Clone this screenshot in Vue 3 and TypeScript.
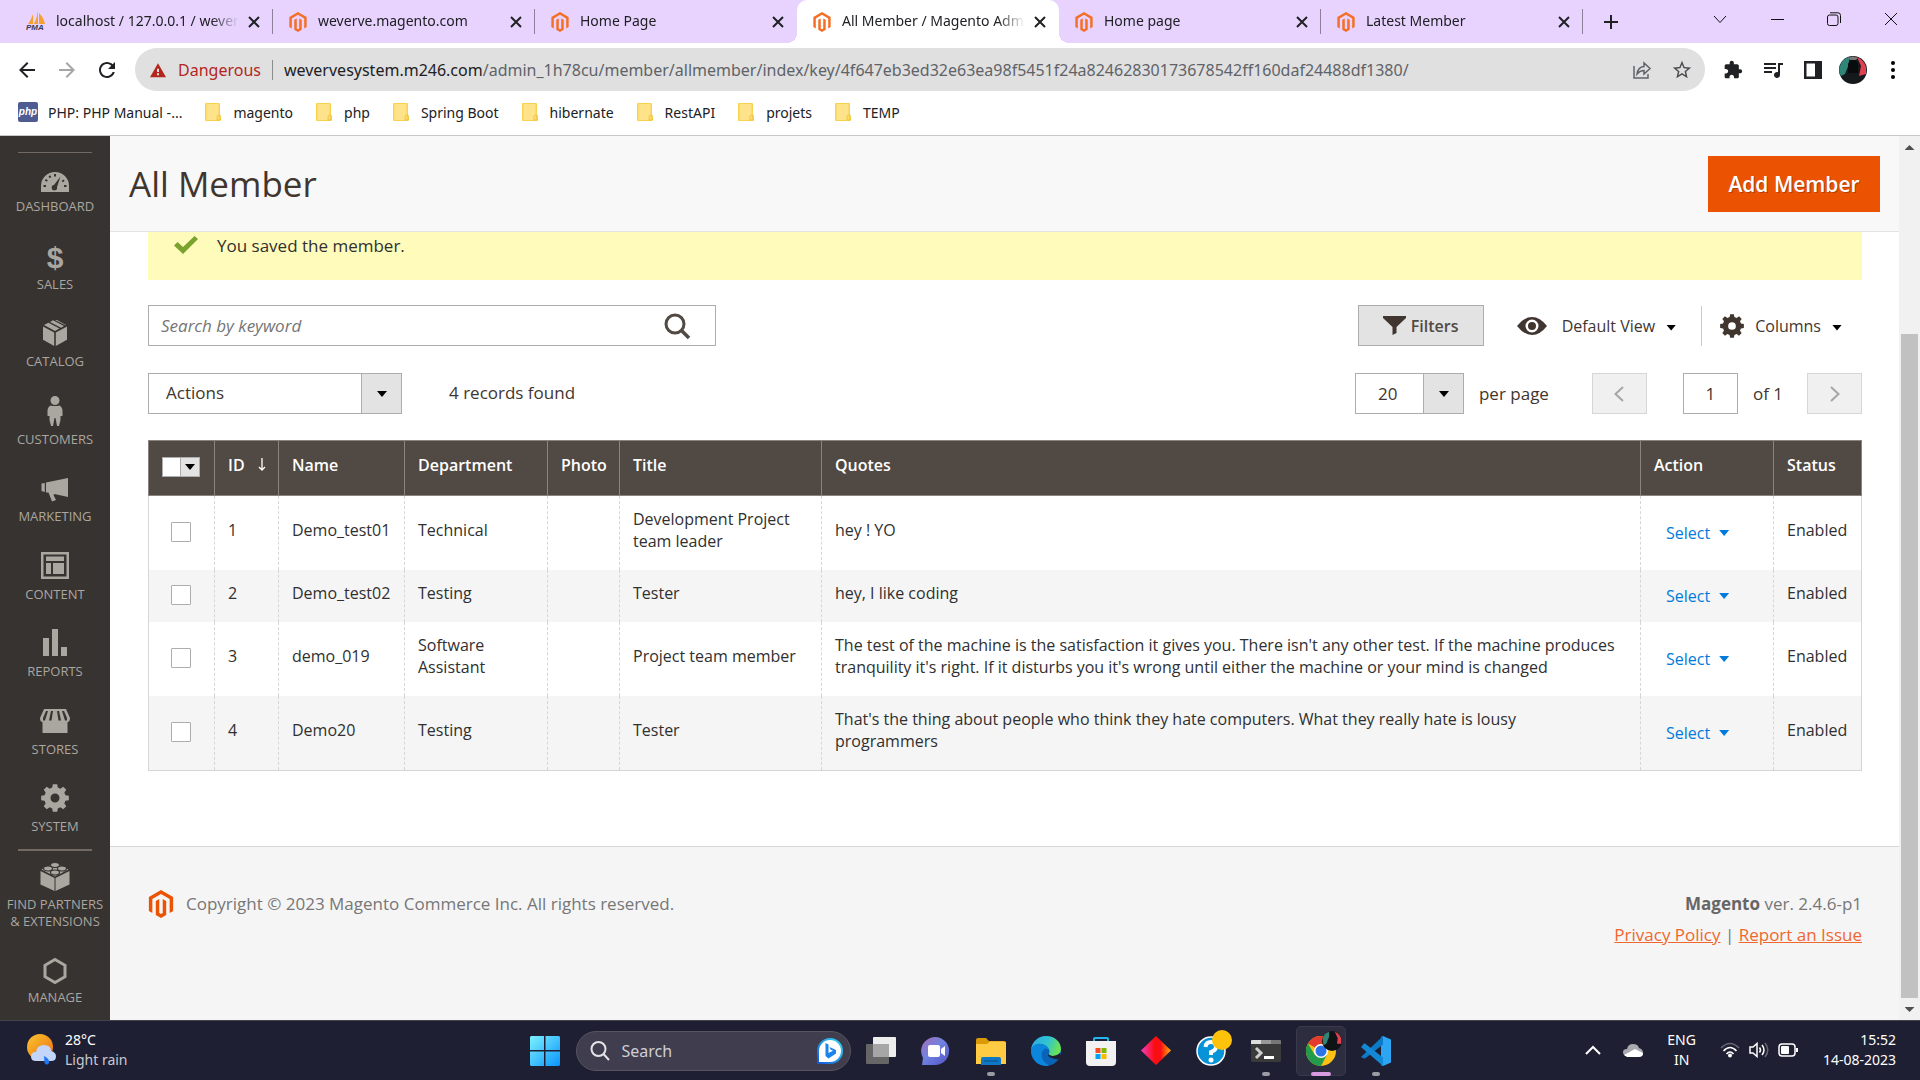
<script setup lang="ts">
import { ref } from 'vue'

interface Tab { title: string; icon: 'pma' | 'magento'; active?: boolean; quiet?: boolean }
interface MenuItem { label: string; path?: string; glyph?: string }
interface Member {
  id: number; name: string; department: string; title: string; quote: string; status: string
}

const tabs: Tab[] = [
  { title: 'localhost / 127.0.0.1 / wever', icon: 'pma' },
  { title: 'weverve.magento.com', icon: 'magento' },
  { title: 'Home Page', icon: 'magento', quiet: true },
  { title: 'All Member / Magento Adm', icon: 'magento', active: true },
  { title: 'Home page', icon: 'magento' },
  { title: 'Latest Member', icon: 'magento' },
]

const folders = ['magento', 'php', 'Spring Boot', 'hibernate', 'RestAPI', 'projets', 'TEMP']

const magentoPath =
  'M12 24l-4.455-2.572v-12l2.97-1.715v12.001l1.485.902 1.485-.902V7.713l2.971 1.715v12L12 24zM22.391 6v12l-2.969 1.714V7.713L12 3.43 4.574 7.713v12.001L1.609 18V6L12 0l10.391 6z'

function gear(c: number, outer: number, inner: number, hole: number): string {
  const points: string[] = []
  for (let i = 0; i < 8; i++) {
    const base = i * 45
    const steps: [number, number][] = [[-15, inner], [-9, outer], [9, outer], [15, inner]]
    for (const [offset, r] of steps) {
      const a = ((base + offset) * Math.PI) / 180
      points.push(`${(c + r * Math.sin(a)).toFixed(2)} ${(c - r * Math.cos(a)).toFixed(2)}`)
    }
  }
  return `M${points.join('L')}ZM${c - hole} ${c}a${hole} ${hole} 0 1 0 ${hole * 2} 0a${hole} ${hole} 0 1 0 ${-hole * 2} 0Z`
}
const gearPath = gear(16, 14, 10.8, 4.5)

const menu: MenuItem[] = [
  {
    label: 'DASHBOARD',
    path: 'M2 30V24a14 14 0 0 1 28 0v6ZM21.500 14.500l-6.500 8.500a2.700 2.700 0 1 0 3 2ZM4.500 23h2.500v2H4.500ZM5.800 18.500l1-1.500 2 1.300-1 1.500ZM9.500 14.500l1.500-1.200 1.300 1.800-1.500 1.200ZM15 12h2v2.500h-2ZM24.500 17.500l1.200 1.500-2 1.300-1-1.500ZM25 23h2.500v2H25Z',
  },
  { label: 'SALES', glyph: '$' },
  {
    label: 'CATALOG',
    path: 'M4 9.500L15.200 15.500V29L4 22.800ZM28 9.500L16.800 15.500V29L28 22.800ZM5 8L9.500 5.700 20.500 11.500 16 14ZM11 5L14 3.300 25 9 22 10.800ZM16 3L18 3 27 8 26.500 8.300Z',
  },
  {
    label: 'CUSTOMERS',
    path: 'M16 1a4.500 4.500 0 1 1 0 9a4.500 4.500 0 1 1 0-9ZM11.500 10.500Q16 11.500 20.500 10.500Q23.500 12 23.500 16V21H21.500V25L20 31H18L16.500 23H15.500L14 31H12L10.500 25V21H8.500V16Q8.500 12 11.500 10.500Z',
  },
  {
    label: 'MARKETING',
    path: 'M7 10.500L29 6V25L15.500 22 14.500 23 17 28 13 29.500 9.500 20.500H7ZM2.500 11.500L5.800 11V20L2.500 19Z',
  },
  {
    label: 'CONTENT',
    path: 'M2 2H30V29H2ZM4.500 4.500V26.500H27.500V4.500ZM7 6.500H25V11H7ZM7 13H12V24H7ZM14 13H25V24H14Z',
  },
  { label: 'REPORTS', path: 'M4 11H10V29H4ZM13 2H19V29H13ZM22 20H28V29H22Z' },
  {
    label: 'STORES',
    path: 'M5 4H27L31 13Q31 17 28.500 17V28H3.500V17Q1 17 1 13ZM7 6L4 13V15.500H6L9 6ZM12 6L10 15.500H12.500L14 6ZM18 6L19.500 15.500H22L20 6ZM23 6L26 15.500H28V13L25 6Z',
  },
  { label: 'SYSTEM', path: gearPath },
]

const members: Member[] = [
  { id: 1, name: 'Demo_test01', department: 'Technical', title: 'Development Project team leader', quote: 'hey ! YO', status: 'Enabled' },
  { id: 2, name: 'Demo_test02', department: 'Testing', title: 'Tester', quote: 'hey, I like coding', status: 'Enabled' },
  { id: 3, name: 'demo_019', department: 'Software Assistant', title: 'Project team member', quote: "The test of the machine is the satisfaction it gives you. There isn't any other test. If the machine produces tranquility it's right. If it disturbs you it's wrong until either the machine or your mind is changed", status: 'Enabled' },
  { id: 4, name: 'Demo20', department: 'Testing', title: 'Tester', quote: "That's the thing about people who think they hate computers. What they really hate is lousy programmers", status: 'Enabled' },
]

const selected = ref<number[]>([])
const keyword = ref('')
const page = ref('1')
</script>

<template>
  <div class="screen">
    <header class="browser">
      <div class="tabs">
        <div v-for="tab in tabs" :key="tab.title" class="tab" :class="{ active: tab.active, quiet: tab.quiet || tab.active }">
          <span class="favicon">
            <svg v-if="tab.icon === 'magento'" width="20" height="20" viewBox="0 0 24 24"><path :d="magentoPath" fill="#f46f25" /></svg>
            <svg v-else width="20" height="22" viewBox="0 0 20 22">
              <path d="M7 3L7 13H2Q5 9 7 3ZM12 0L12 13H8Q11 7 12 0ZM13 2Q18 7 19 13H13Z" fill="#f7a032" />
              <text x="0" y="19" font-family="Liberation Sans, sans-serif" font-size="8" font-weight="700" font-style="italic" fill="#3a3a52">PMA</text>
            </svg>
          </span>
          <span class="tab-title">{{ tab.title }}</span>
          <button class="bare" :aria-label="'Close ' + tab.title">
            <svg width="12" height="12" viewBox="0 0 12 12"><path d="M1 1L11 11M11 1L1 11" stroke="#202124" stroke-width="2" /></svg>
          </button>
        </div>
        <button class="bare new-tab" aria-label="New tab">
          <svg width="16" height="16" viewBox="0 0 16 16"><path d="M8 1V15M1 8H15" stroke="#202124" stroke-width="2" /></svg>
        </button>
        <div class="window-buttons">
          <button class="bare" aria-label="Search tabs"><svg width="14" height="14" viewBox="0 0 14 14"><path d="M1 4L7 10.500L13 4" fill="none" stroke="#111" /></svg></button>
          <button class="bare" aria-label="Minimize"><svg width="14" height="14" viewBox="0 0 14 14"><path d="M1 7.500H14" stroke="#111" /></svg></button>
          <button class="bare" aria-label="Restore"><svg width="14" height="14" viewBox="0 0 14 14"><rect x=".5" y="3" width="10.500" height="10.500" rx="2" fill="none" stroke="#111" /><path d="M3 .8H11Q13.500 .8 13.500 3.500V11" fill="none" stroke="#111" /></svg></button>
          <button class="bare" aria-label="Close"><svg width="14" height="14" viewBox="0 0 14 14"><path d="M1 1L13 13M13 1L1 13" stroke="#111" /></svg></button>
        </div>
      </div>

      <div class="toolbar">
        <button class="bare tool" aria-label="Back"><svg width="24" height="24" viewBox="0 0 24 24"><path d="M20 11H7.830l5.590-5.590L12 4l-8 8 8 8 1.410-1.410L7.830 13H20v-2z" fill="#202124" /></svg></button>
        <button class="bare tool" aria-label="Forward"><svg width="24" height="24" viewBox="0 0 24 24"><path d="M4 11h12.170l-5.590-5.590L12 4l8 8-8 8-1.410-1.410L16.170 13H4z" fill="#a6a6a8" /></svg></button>
        <button class="bare tool" aria-label="Reload"><svg width="24" height="24" viewBox="0 0 24 24"><path d="M17.650 6.350C16.200 4.900 14.210 4 12 4c-4.420 0-7.990 3.580-7.990 8s3.570 8 7.990 8c3.730 0 6.840-2.550 7.730-6h-2.080c-.82 2.330-3.040 4-5.650 4-3.310 0-6-2.690-6-6s2.690-6 6-6c1.660 0 3.140.69 4.220 1.780L13 11h7V4l-2.350 2.350z" fill="#202124" /></svg></button>
        <div class="omnibox">
          <svg width="16" height="16" viewBox="0 0 24 22"><path d="M0 22h24L12 1 0 22zm13.500-3h-3v-3h3v3zm0-5h-3V9h3v5z" fill="#b3261e" /></svg>
          <span class="danger">Dangerous</span>
          <span class="url"><b>wevervesystem.m246.com</b>/admin_1h78cu/member/allmember/index/key/4f647eb3ed32e63ea98f5451f24a82462830173678542ff160daf24488df1380/</span>
          <button class="bare tool" aria-label="Share"><svg width="20" height="20" viewBox="0 0 20 20"><path d="M2 6V18H16V14M5 14Q6 7 12 6.500V3L18 8.500L12 14V10.500Q8 10.500 5 14Z" fill="none" stroke="#5f6368" stroke-width="1.500" /></svg></button>
          <button class="bare tool" aria-label="Bookmark"><svg width="22" height="22" viewBox="0 0 24 24"><path d="M22 9.240l-7.190-.62L12 2 9.190 8.630 2 9.240l5.460 4.730L5.820 21 12 17.270 18.180 21l-1.630-7.030L22 9.240zM12 15.400l-3.760 2.270 1-4.280-3.320-2.880 4.380-.38L12 6.100l1.710 4.040 4.380.38-3.320 2.880 1 4.280L12 15.400z" fill="#4a4c50" /></svg></button>
        </div>
        <button class="bare tool" aria-label="Extensions"><svg width="20" height="20" viewBox="0 0 24 24"><path d="M20.500 11H19V7c0-1.100-.9-2-2-2h-4V3.500C13 2.120 11.880 1 10.500 1S8 2.120 8 3.500V5H4c-1.100 0-1.990.9-1.990 2v3.800H3.500c1.490 0 2.700 1.210 2.700 2.700s-1.210 2.700-2.700 2.700H2V20c0 1.100.9 2 2 2h3.800v-1.500c0-1.490 1.210-2.700 2.700-2.700 1.490 0 2.700 1.210 2.700 2.700V22H17c1.100 0 2-.9 2-2v-4h1.500c1.380 0 2.500-1.120 2.500-2.500S21.880 11 20.500 11z" fill="#202124" /></svg></button>
        <button class="bare tool" aria-label="Media"><svg width="24" height="24" viewBox="0 0 24 24"><path d="M15 5H3v2h12V5zm0 4H3v2h12V9zM3 15h8v-2H3v2zM17 5v9.180c-.31-.11-.65-.18-1-.18-1.660 0-3 1.340-3 3s1.340 3 3 3 3-1.340 3-3V7h3V5h-5z" fill="#202124" /></svg></button>
        <button class="bare tool" aria-label="Side panel"><svg width="18" height="18" viewBox="0 0 18 18"><path d="M0 0H18V18H0ZM2.500 2.500V15.500H11V2.500Z" fill="#202124" fill-rule="evenodd" /></svg></button>
        <button class="bare tool" aria-label="Profile">
          <svg width="28" height="28" viewBox="0 0 28 28"><circle cx="14" cy="14" r="14" fill="#15191c" /><path d="M1 10Q3 3 10 1V8L6 18L2 20Q-1 15 1 10Z" fill="#2f8577" /><path d="M18 1Q25 4 27 11V18L20 20L22 10Z" fill="#e0404f" /><path d="M9 8Q14-3 19 8V17H9Z" fill="#090c0f" /><path d="M9 2Q14-1 19 2L17 4H11Z" fill="#777" /></svg>
        </button>
        <button class="bare tool" aria-label="Menu"><svg width="4" height="18" viewBox="0 0 4 18"><circle cx="2" cy="2" r="2" /><circle cx="2" cy="9" r="2" /><circle cx="2" cy="16" r="2" /></svg></button>
      </div>

      <nav class="bookmarks" aria-label="Bookmarks">
        <a href="#" class="bookmark">
          <svg width="20" height="20" viewBox="0 0 20 20"><rect width="20" height="20" rx="2" fill="#4f5b93" /><text x="10" y="13" text-anchor="middle" font-family="Liberation Sans, sans-serif" font-size="10" font-weight="700" font-style="italic" fill="#fff">php</text></svg>
          PHP: PHP Manual -...
        </a>
        <a v-for="folder in folders" :key="folder" href="#" class="bookmark folder">
          <svg width="16" height="18" viewBox="0 0 16 18"><path d="M1 0H14Q15 0 15 1V12Q16 12 16 14V17Q16 18 14.500 18H1Q0 18 0 17V1Q0 0 1 0Z" fill="#f6d34f" /><path d="M1.500 1H13.500V17H1.500Z" fill="#ffe38b" /><path d="M12 17V13.500Q12 12 14 12H15V17Z" fill="#ffdc6b" stroke="#e8bd35" stroke-width=".7" /></svg>
          {{ folder }}
        </a>
      </nav>
    </header>

    <div class="workspace">
      <aside class="sidebar">
        <ul class="menu">
          <li v-for="item in menu" :key="item.label">
            <a href="#" class="menu-item">
              <svg class="menu-icon" viewBox="0 -1 32 36">
                <text v-if="item.glyph" x="16" y="28" text-anchor="middle" font-family="Liberation Sans, sans-serif" font-size="30" font-weight="700">{{ item.glyph }}</text>
                <path v-else :d="item.path" fill-rule="evenodd" />
              </svg>
              {{ item.label }}
            </a>
          </li>
        </ul>
        <ul class="menu extra">
          <li>
            <a href="#" class="menu-item">
              <svg class="menu-icon" viewBox="0 0 32 36">
                <path d="M1.500 12L15.500 19V32L1.500 25.500ZM30.500 12L16.500 19V32L30.500 25.500ZM2.500 10.500L16 4L29.500 10.500L16 17.500Z" />
                <g stroke="#373330" stroke-width="1.200"><ellipse cx="16" cy="6" rx="4.500" ry="2.500" /><ellipse cx="9" cy="9.500" rx="4.500" ry="2.500" /><ellipse cx="23" cy="9.500" rx="4.500" ry="2.500" /><ellipse cx="16" cy="13.500" rx="4.500" ry="2.500" /></g>
              </svg>
              FIND PARTNERS<br>&amp; EXTENSIONS
            </a>
          </li>
          <li>
            <a href="#" class="menu-item">
              <svg class="menu-icon" viewBox="0 0 32 36"><path d="M16 7.500L26 13.300V24.700L16 30.500L6 24.700V13.300Z" fill="none" stroke="#aaa6a0" stroke-width="3" /></svg>
              MANAGE
            </a>
          </li>
        </ul>
      </aside>

      <main class="page">
        <div class="page-head">
          <h1>All Member</h1>
          <button class="add">Add Member</button>
        </div>

        <div class="content">
          <p class="message">
            <svg width="24" height="18" viewBox="0 0 24 18"><path d="M0 9.500L3.500 6L9 11L20.500 0L24 3L9 18Z" fill="#79a22e" /></svg>
            You saved the member.
          </p>

          <div class="controls">
            <div class="search">
              <input v-model="keyword" type="text" placeholder="Search by keyword" aria-label="Search by keyword">
              <button class="bare" aria-label="Search"><svg width="28" height="28" viewBox="0 0 28 28"><circle cx="12" cy="12" r="9" fill="none" stroke="#514943" stroke-width="3" /><path d="M18 18L26 26" stroke="#514943" stroke-width="3.500" /></svg></button>
            </div>
            <div class="tools">
              <button class="filters"><svg width="23" height="19" viewBox="0 0 23 19"><path d="M0 0H23V2L13.500 11V17L9.500 19V11L0 2Z" fill="#41362f" /></svg>Filters</button>
              <button class="bare view"><svg width="30" height="18" viewBox="0 0 30 18"><path d="M0 9Q7 0 15 0T30 9Q23 18 15 18T0 9ZM15 2.500a6.500 6.500 0 1 0 0 13a6.500 6.500 0 1 0 0-13ZM15 5a4 4 0 1 1 0 8a4 4 0 1 1 0-8Z" fill="#41362f" fill-rule="evenodd" /></svg>Default View<i class="caret"></i></button>
              <button class="bare columns"><svg width="24" height="24" viewBox="2 2 28 28"><path :d="gearPath" fill="#41362f" fill-rule="evenodd" /></svg>Columns<i class="caret"></i></button>
            </div>
          </div>

          <div class="controls second">
            <div class="drop actions">
              <select aria-label="Actions"><option>Actions</option></select><i class="caret"></i>
            </div>
            <span class="records">4 records found</span>
            <div class="pager">
              <label class="size"><span class="drop"><select><option>20</option></select><i class="caret"></i></span>per page</label>
              <button class="step" disabled aria-label="Previous page"><svg width="10" height="16" viewBox="0 0 10 16"><path d="M9 1L1.500 8L9 15" fill="none" stroke="#a6a6a6" stroke-width="2" /></svg></button>
              <label class="current"><input v-model="page" type="text" aria-label="Page">of 1</label>
              <button class="step" disabled aria-label="Next page"><svg width="10" height="16" viewBox="0 0 10 16"><path d="M1 1L8.500 8L1 15" fill="none" stroke="#a6a6a6" stroke-width="2" /></svg></button>
            </div>
          </div>

          <table>
            <colgroup><col class="c-check"><col class="c-id"><col class="c-name"><col class="c-dept"><col class="c-photo"><col class="c-title"><col><col class="c-action"><col class="c-status"></colgroup>
            <thead>
              <tr>
                <th><button class="multi" aria-label="Select rows"><span></span><i class="caret"></i></button></th>
                <th>ID<svg class="sort" width="8" height="13" viewBox="0 0 8 13"><path d="M4 0V12M1 9L4 12L7 9" fill="none" stroke="#fff" stroke-width="1.300" /></svg></th>
                <th>Name</th><th>Department</th><th>Photo</th><th>Title</th><th>Quotes</th><th>Action</th><th>Status</th>
              </tr>
            </thead>
            <tbody>
              <tr v-for="m in members" :key="m.id">
                <td class="check"><input v-model="selected" type="checkbox" :value="m.id" :aria-label="'Select ' + m.name"></td>
                <td>{{ m.id }}</td>
                <td>{{ m.name }}</td>
                <td>{{ m.department }}</td>
                <td></td>
                <td>{{ m.title }}</td>
                <td class="quote">{{ m.quote }}</td>
                <td class="action"><button class="bare">Select<i class="caret"></i></button></td>
                <td>{{ m.status }}</td>
              </tr>
            </tbody>
          </table>
        </div>

        <footer class="foot">
          <p class="copyright"><svg width="28" height="28" viewBox="0 0 24 24"><path :d="magentoPath" fill="#eb5202" /></svg>Copyright © 2023 Magento Commerce Inc. All rights reserved.</p>
          <div class="legal">
            <p><strong>Magento</strong> ver. 2.4.6-p1</p>
            <p><a href="#">Privacy Policy</a> | <a href="#">Report an Issue</a></p>
          </div>
        </footer>
      </main>

      <div class="scrollbar">
        <i class="up"></i>
        <span class="thumb"></span>
        <i class="down"></i>
      </div>
    </div>

    <div class="taskbar">
      <div class="weather">
        <svg width="30" height="32" viewBox="0 0 30 32">
          <defs><linearGradient id="sun" x1="0" y1="0" x2="1" y2="1"><stop offset="0" stop-color="#f8c62f" /><stop offset="1" stop-color="#ef6c12" /></linearGradient></defs>
          <circle cx="13" cy="13" r="13" fill="url(#sun)" /><path d="M9 27Q4 27 4 22.500T9 18Q10 11 17 11T24 17Q29 18 29 22.500T24 27Z" fill="#c4d5fa" /><path d="M17 22Q23 25 22 29Q20 32 17.500 29Z" fill="#2276ef" />
        </svg>
        <div>28°C<br><span>Light rain</span></div>
      </div>

      <div class="apps">
        <button class="bare" aria-label="Start">
          <svg width="30" height="30" viewBox="0 0 30 30"><defs><linearGradient id="win" x1="0" y1="0" x2="1" y2="1" ><stop offset="0" stop-color="#7df1ff" /><stop offset="1" stop-color="#0a94fb" /></linearGradient></defs><path d="M1 0H14V14H0V1ZM15.500 0H29L30 1V14H15.500ZM0 15.500H14V30H1L0 29ZM15.500 15.500H30V29L29 30H15.500Z" fill="url(#win)" /></svg>
        </button>
        <div class="task-search">
          <svg width="20" height="20" viewBox="0 0 20 20"><circle cx="8.500" cy="8" r="7" fill="none" stroke="#e4e4e8" stroke-width="2" /><path d="M13.500 13L19 19" stroke="#e4e4e8" stroke-width="2" /></svg>
          <input type="text" placeholder="Search" aria-label="Search Windows">
          <svg width="26" height="26" viewBox="0 0 26 26"><defs><linearGradient id="bing" x1="1" y1="0" x2="0" y2="1"><stop offset="0" stop-color="#33dcf5" /><stop offset="1" stop-color="#1557d5" /></linearGradient></defs><path d="M1 25V13A12 12 0 1 1 13 25Z" fill="#fff" stroke="url(#bing)" stroke-width="2" /><path d="M8.500 5L11.500 6.500V15L16 12.800L13.500 11.500L12.500 9L19 12V15.500L11.500 20.500L8.500 18Z" fill="#1b83ec" /></svg>
        </div>
        <button class="bare" aria-label="Task view"><svg width="30" height="30" viewBox="0 0 30 30"><rect x="7" y="1" width="23" height="20" rx="1" fill="#ededed" /><rect x="0" y="8" width="23" height="20" rx="1" fill="#666" /><rect x="7" y="8" width="16" height="13" fill="#a6a6a6" /></svg></button>
        <button class="bare" aria-label="Chat"><svg width="30" height="30" viewBox="0 0 30 30"><defs><linearGradient id="chat" x1="0" y1="0" x2="1" y2="1"><stop offset="0" stop-color="#a66bb4" /><stop offset=".45" stop-color="#7183e1" /><stop offset="1" stop-color="#5052c6" /></linearGradient></defs><path d="M1 29L2 22A14 14 0 1 1 15 29Z" fill="url(#chat)" /><rect x="7" y="9" width="12" height="12" rx="2" fill="#fff" /><path d="M20 13L24 10V20L20 17Z" fill="#fff" /></svg></button>
        <button class="bare running" aria-label="File Explorer"><svg width="30" height="30" viewBox="0 0 30 30"><path d="M0 4Q0 2 2 2H10L13 5H28Q30 5 30 7V12H0Z" fill="#d99a05" /><path d="M0 8H11L14 5.500H28Q30 5.500 30 7V28H0Z" fill="#ffcb42" /><path d="M5 29V23Q5 21 7 21H23Q25 21 25 23V29Z" fill="#0f78c4" /><path d="M8 25H22" stroke="#084f86" /></svg></button>
        <button class="bare" aria-label="Edge"><svg width="30" height="30" viewBox="0 0 30 30"><defs><linearGradient id="edge" x1="0" y1="0" x2="1" y2=".3"><stop offset="0" stop-color="#2aa9e6" /><stop offset=".6" stop-color="#31c5ce" /><stop offset="1" stop-color="#69e05a" /></linearGradient></defs><circle cx="15" cy="15" r="15" fill="#0b63b8" /><path d="M0 14C1 5 8 0 15 0C24 0 30 6 30 13C30 18 26 20 22 20C18 20 17 18 18.500 16.500C19 11 12 7 7 8Q2 9 0 14Z" fill="url(#edge)" /><path d="M0 14Q2 7 9 8Q16 8 18 14Q14 10 11 16Q9 25 18 29.500Q12 31 6 27Q0 22 0 14Z" fill="#0c86dc" /><path d="M18.500 16.500Q16.500 19.500 22 20Q26 20 29 17L30 21L27.500 23Q22 24 17 20Z" fill="#1f1f33" /></svg></button>
        <button class="bare" aria-label="Store"><svg width="30" height="30" viewBox="0 0 30 30"><path d="M8 7V3Q8 2 9 2H21Q22 2 22 3V7" fill="none" stroke="#22b6ee" stroke-width="2" /><path d="M0 5H30V26Q30 30 26 30H4Q0 30 0 26Z" fill="#f2f2f2" /><path d="M9.500 12H14.500V17H9.500Z" fill="#f25022" /><path d="M15.500 12H20.500V17H15.500Z" fill="#7fba00" /><path d="M9.500 18H14.500V23H9.500Z" fill="#00a4ef" /><path d="M15.500 18H20.500V23H15.500Z" fill="#ffb900" /></svg></button>
        <button class="bare" aria-label="Design"><svg width="30" height="30" viewBox="0 0 30 30"><defs><linearGradient id="gem"><stop offset="0" stop-color="#f53cc0" /><stop offset=".45" stop-color="#fb0d14" /><stop offset=".65" stop-color="#fb0d14" /><stop offset="1" stop-color="#ffb10a" /></linearGradient></defs><path d="M15 0L30 14.500L15 29L0 14.500Z" fill="url(#gem)" /></svg></button>
        <button class="bare badge" aria-label="Help"><svg width="30" height="30" viewBox="0 0 30 30"><circle cx="15" cy="15" r="14" fill="#0693d7" stroke="#fff" stroke-width="1.500" /><path d="M9.500 11Q10 6 15 6T20 11Q20 14 15 16V19" fill="none" stroke="#fff" stroke-width="4" /><circle cx="15" cy="24" r="2.500" fill="#fff" /></svg></button>
        <button class="bare running" aria-label="Terminal"><svg width="30" height="30" viewBox="0 0 30 30"><rect x="0" y="4" width="30" height="22" rx="1.500" fill="#3a3a3a" /><path d="M0 8V5Q0 4 1 4H10V8Z" fill="#ddd" /><path d="M10 4H20V8H10Z" fill="#999" /><path d="M20 4H29Q30 4 30 5V8H20Z" fill="#777" /><path d="M5 12L10 17L5 22" fill="none" stroke="#ccc" stroke-width="3" /><path d="M13 21.500H23" stroke="#fff" stroke-width="3" /></svg></button>
        <button class="bare current-app" aria-label="Chrome"><svg width="30" height="30" viewBox="0 0 30 30"><circle cx="15" cy="15" r="15" fill="#fbc116" /><path d="M15 15L2 7.500A15 15 0 0 1 28 7.500L15 8Z" fill="#e33b2e" /><path d="M2 7.500A15 15 0 0 0 15 30L21 18.500L8.500 18.500Z" fill="#239b4a" /><circle cx="15" cy="15" r="7" fill="#fff" /><circle cx="15" cy="15" r="5.500" fill="#2b74e8" /></svg>
          <svg class="avatar-mini" width="20" height="20" viewBox="0 0 28 28"><circle cx="14" cy="14" r="14" fill="#101315" /><path d="M1 10Q3 3 10 1V8L6 18L2 20Z" fill="#2f8577" /><path d="M18 1Q25 4 27 11V18L21 18L22 10Z" fill="#e0404f" /></svg></button>
        <button class="bare running" aria-label="Visual Studio Code"><svg width="30" height="30" viewBox="0 0 30 30"><path d="M22 0L30 3.500V26.500L22 30L20 29V1Z" fill="#2da5f3" /><path d="M1 20L22 0V8.500L4 22.500H3L0 21Z" fill="#0b7bc9" /><path d="M1 10L3 7.500H4L22 21.500V30L0 11Z" fill="#1389d6" /></svg></button>
      </div>

      <div class="tray">
        <svg width="16" height="10" viewBox="0 0 16 10"><path d="M1 9L8 2L15 9" fill="none" stroke="#fff" stroke-width="2" /></svg>
        <svg class="cloud" width="20" height="14" viewBox="0 0 20 14"><path d="M3 13Q0 12 0 9T4 6Q5 1 10 1T16 5Q20 6 20 10T16 13Z" fill="#aaa9b0" /><path d="M1 12L12 6L20 10Q20 14 16 14H4Z" fill="#fff" /></svg>
        <span class="lang">ENG<br>IN</span>
        <svg width="20" height="16" viewBox="0 0 20 16"><path d="M1 6Q10-3 19 6" fill="none" stroke="#666675" stroke-width="1.500" /><path d="M3.500 9Q10 2 16.500 9M6.500 12Q10 8 13.500 12" fill="none" stroke="#fff" stroke-width="1.700" /><circle cx="10" cy="13.500" r="2" fill="#fff" /></svg>
        <svg width="20" height="16" viewBox="0 0 20 16"><path d="M1 5H4L8 1.500V14.500L4 11H1Z" fill="none" stroke="#fff" stroke-width="1.500" /><path d="M10.500 5.500Q12.500 8 10.500 10.500M13 3Q17 8 13 13" fill="none" stroke="#fff" stroke-width="1.500" /><path d="M16 1Q21.500 8 16 15" fill="none" stroke="#666675" stroke-width="1.500" /></svg>
        <svg width="20" height="14" viewBox="0 0 20 14"><rect x="1" y="1" width="16" height="12" rx="3" fill="none" stroke="#fff" stroke-width="1.500" /><rect x="3" y="3" width="8" height="8" rx="1" fill="#fff" /><path d="M18 5H20V9H18Z" fill="#fff" /></svg>
        <span class="clock">15:52<br>14-08-2023</span>
      </div>
    </div>
  </div>
</template>

<style>
body {
  margin: 0;
}
</style>

<style scoped>
* {
  box-sizing: border-box;
}
.screen {
  min-height: 100vh;
  display: flex;
  flex-direction: column;
  background: #fff;
  color: #303030;
  font-family: "Open Sans", "Noto Sans", sans-serif;
}
button,
input,
select {
  font: inherit;
  color: inherit;
}
svg {
  flex: none;
  display: block;
}
p,
h1,
ul {
  margin: 0;
  padding: 0;
}
.bare {
  border: 0;
  padding: 0;
  background: none;
  display: flex;
  align-items: center;
  justify-content: center;
}
.caret {
  flex: none;
  width: 10px;
  height: 6px;
  background: #000;
  clip-path: polygon(0 0, 100% 0, 50% 100%);
}

/* browser frame */
.browser {
  color: #202124;
  font-family: "Noto Sans", "Open Sans", sans-serif;
  font-size: 14px;
  border-bottom: 1px solid #c8c8c8;
}
.tabs {
  height: 43px;
  display: flex;
  align-items: center;
  padding-left: 11px;
  background: #e8d3ff;
}
.tab {
  position: relative;
  flex: 0 1 262px;
  min-width: 0;
  height: 43px;
  display: flex;
  align-items: center;
  padding: 0 13px 0 16px;
}
.tab::after {
  content: "";
  position: absolute;
  right: 0;
  top: 9px;
  width: 1px;
  height: 25px;
  background: #8d8299;
}
.tab.quiet::after {
  display: none;
}
.tab.active {
  background: #fff;
  border-radius: 10px 10px 0 0;
}
.tab.active::before {
  content: "";
  position: absolute;
  left: -10px;
  right: -10px;
  bottom: 0;
  height: 10px;
  background:
    radial-gradient(circle at 0 0, transparent 10px, #fff 10px) left / 10px 10px no-repeat,
    radial-gradient(circle at 100% 0, transparent 10px, #fff 10px) right / 10px 10px no-repeat;
}
.favicon {
  flex: none;
  width: 18px;
  margin-right: 11px;
  display: flex;
  justify-content: center;
}
.tab-title {
  flex: 1;
  overflow: hidden;
  white-space: nowrap;
  margin-right: 9px;
  padding-bottom: 2px;
  mask-image: linear-gradient(90deg, #000 85%, transparent);
}
.new-tab {
  margin-left: 20px;
}
.window-buttons {
  margin-left: auto;
  padding: 0 22px 6px 0;
  display: flex;
  gap: 43px;
}
.toolbar {
  display: flex;
  align-items: center;
  gap: 16px;
  padding: 5px 15px 2px;
}
.tool {
  flex: none;
  width: 24px;
  height: 28px;
}
.omnibox {
  flex: 1;
  min-width: 0;
  height: 43px;
  display: flex;
  align-items: center;
  padding: 0 11px 0 15px;
  border-radius: 22px;
  background: #e0e0e0;
  font-size: 16px;
}
.danger {
  margin-left: 12px;
  padding-right: 11px;
  border-right: 1px solid #8c8c8c;
  line-height: 20px;
  color: #b3261e;
}
.url {
  flex: 1;
  min-width: 0;
  margin-left: 11px;
  overflow: hidden;
  white-space: nowrap;
  color: #5f6368;
}
.url b {
  font-weight: 400;
  color: #202124;
}
.omnibox .tool + .tool {
  margin-left: 16px;
}
.bookmarks {
  height: 42px;
  display: flex;
  align-items: center;
  padding: 0 18px 4px;
  gap: 23px;
}
.bookmark {
  display: flex;
  align-items: center;
  gap: 10px;
  color: #202124;
  text-decoration: none;
}
.bookmark.folder {
  gap: 12px;
}

/* admin sidebar */
.workspace {
  flex: 1;
  display: flex;
}
.sidebar {
  flex: none;
  width: 110px;
  display: flex;
  flex-direction: column;
  background: #373330;
  padding: 16px 0 14px;
}
.sidebar::before {
  content: "";
  flex: none;
  height: 1px;
  margin: 0 18px 8px;
  background: #736963;
}
.menu {
  list-style: none;
  flex: 1;
  display: flex;
  flex-direction: column;
  justify-content: space-between;
}
.menu.extra {
  flex: none;
  margin-top: 14px;
  gap: 22px;
}
.menu.extra::before {
  content: "";
  height: 2px;
  margin: 0 18px -14px;
  background: #736963;
}
.menu-item {
  display: block;
  text-align: center;
  text-decoration: none;
  color: #aaa6a0;
  font-size: 13px;
  line-height: 17px;
}
.menu-icon {
  width: 32px;
  height: 36px;
  margin: 0 auto 1px;
  fill: #aaa6a0;
}

/* admin page */
.page {
  flex: 1;
  min-width: 0;
  display: flex;
  flex-direction: column;
}
.page-head {
  height: 96px;
  display: flex;
  align-items: center;
  justify-content: space-between;
  padding: 0 19px;
  background: #f8f8f8;
  border-bottom: 1px solid #e3e3e3;
}
h1 {
  font-size: 35px;
  font-weight: 400;
  color: #41362f;
}
.add {
  height: 56px;
  width: 172px;
  border: 0;
  padding: 0;
  background: #eb5202;
  color: #fff;
  font-size: 21px;
  font-weight: 600;
  text-shadow: 1px 1px 0 rgba(0, 0, 0, 0.25);
}
.content {
  padding: 0 37px 75px 38px;
}
.message {
  height: 48px;
  display: flex;
  gap: 19px;
  align-items: center;
  padding: 0 26px 22px;
  background: #fffbbb;
  font-size: 17px;
}
.controls {
  height: 41px;
  margin-top: 25px;
  display: flex;
  align-items: center;
  font-size: 16px;
  color: #41362f;
}
.controls.second {
  margin: 27px 0 26px;
  font-size: 17px;
}
.search {
  flex: 0 1 568px;
  height: 41px;
  display: flex;
  align-items: center;
  border: 1px solid #adadad;
  padding-right: 24px;
}
.search input {
  flex: 1;
  min-width: 0;
  border: 0;
  outline: 0;
  padding: 0 12px;
  font-size: 17px;
}
.search input::placeholder {
  font-style: italic;
  color: #757575;
}
.tools {
  margin-left: auto;
  display: flex;
  align-items: center;
}
.filters {
  width: 126px;
  height: 41px;
  display: flex;
  align-items: center;
  justify-content: center;
  gap: 5px;
  border: 1px solid #adadad;
  background: #e3e3e3;
  color: #514943;
  font-weight: 600;
}
.view {
  margin-left: 33px;
}
.view svg {
  margin-right: 15px;
}
.view .caret,
.columns .caret {
  margin: 4px 0 0 11px;
}
.columns {
  height: 40px;
  margin-left: 25px;
  padding: 0 20px 0 18px;
  border-left: 1px solid #ccc;
}
.columns svg {
  margin-right: 11px;
}
.drop {
  position: relative;
  display: block;
  width: 109px;
  height: 41px;
}
.drop select {
  appearance: none;
  width: 100%;
  height: 100%;
  padding: 0 40px 0 22px;
  border: 1px solid #adadad;
  border-radius: 0;
  background: linear-gradient(90deg, #adadad 1px, #e3e3e3 1px) right / 40px 100% no-repeat #fff;
}
.drop .caret {
  position: absolute;
  right: 15px;
  top: 18px;
}
.drop.actions {
  width: 254px;
}
.drop.actions select {
  padding: 0 40px 2px 17px;
}
.records {
  margin-left: 47px;
  padding-bottom: 2px;
}
.pager {
  margin-left: auto;
  display: flex;
  align-items: center;
}
.size,
.current {
  display: flex;
  align-items: center;
  gap: 15px;
}
.size {
  margin-right: 43px;
}
.current {
  margin: 0 24px 0 36px;
}
.current input {
  width: 55px;
  height: 41px;
  border: 1px solid #adadad;
  text-align: center;
}
.step {
  width: 55px;
  height: 41px;
  display: flex;
  align-items: center;
  justify-content: center;
  border: 1px solid #d6d6d6;
  background: #f0f0f0;
}

table {
  width: 100%;
  table-layout: fixed;
  border-collapse: collapse;
  font-size: 16px;
  line-height: 22px;
}
.c-check { width: 66px; }
.c-id { width: 64px; }
.c-name { width: 126px; }
.c-dept { width: 143px; }
.c-photo { width: 72px; }
.c-title { width: 202px; }
.c-action { width: 133px; }
.c-status { width: 88px; }
th {
  padding: 12px 10px 18px 13px;
  border: 1px solid #8a837f;
  background: #514943;
  color: #fff;
  font-weight: 600;
  text-align: left;
  white-space: nowrap;
}
td {
  padding: 12px 10px 18px 13px;
  border-left: 1px dashed #d6d6d6;
}
td:first-child {
  border-left: 1px solid #d6d6d6;
}
td:last-child {
  border-right: 1px solid #d6d6d6;
}
td.quote {
  padding-right: 22px;
}
tbody tr:nth-child(even) {
  background: #f5f5f5;
}
tbody tr:last-child td {
  border-bottom: 1px solid #d6d6d6;
}
.sort {
  display: inline-block;
  margin-left: 13px;
}
.multi {
  width: 38px;
  height: 20px;
  display: flex;
  align-items: center;
  margin-top: 4px;
  padding: 0;
  border: 1px solid #adadad;
  background: #e3e3e3;
}
.multi span {
  width: 18px;
  height: 18px;
  margin-right: 4px;
  border-right: 1px solid #adadad;
  background: #fff;
}
td.check {
  padding: 14px 1px 16px 0;
}
.check input {
  appearance: none;
  display: block;
  width: 20px;
  height: 20px;
  margin: 0 auto;
  border: 1px solid #adadad;
  border-radius: 1px;
  background: #fff;
}
.check input:checked {
  background: #514943;
}
td.action {
  padding: 15px 0 15px 25px;
}
.action .bare {
  gap: 9px;
  color: #007bdb;
}
.action .caret {
  background: #007bdb;
}

.foot {
  flex: 1;
  display: flex;
  justify-content: space-between;
  align-items: flex-start;
  padding: 41px 37px 0 38px;
  border-top: 1px solid #d6d6d6;
  background: #f5f5f5;
  color: #777;
  font-size: 17px;
  line-height: 31px;
}
.copyright {
  display: flex;
  align-items: center;
  gap: 11px;
  margin-left: -1px;
}
.legal {
  text-align: right;
}
.legal strong {
  color: #666;
}
.legal a {
  color: #ef672f;
}

.scrollbar {
  flex: none;
  width: 21px;
  display: flex;
  flex-direction: column;
  align-items: center;
  padding: 9px 0 8px;
  background: #f1f1f1;
}
.scrollbar .thumb {
  width: 17px;
  flex: 1;
  margin: 184px 0 9px;
  background: #c1c1c1;
}
.up,
.down {
  width: 10px;
  height: 5px;
  background: #505050;
  clip-path: polygon(0 100%, 50% 0, 100% 100%);
}
.down {
  clip-path: polygon(0 0, 100% 0, 50% 100%);
}

/* desktop taskbar */
.taskbar {
  height: 60px;
  display: grid;
  grid-template-columns: 1fr auto 1fr;
  align-items: center;
  border-top: 1px solid #44444c;
  background: #1f1f33;
  color: #fff;
  font-family: "Noto Sans", "Open Sans", sans-serif;
  font-size: 14px;
  line-height: 20px;
}
.weather {
  display: flex;
  align-items: center;
  gap: 8px;
  padding: 0 0 2px 27px;
}
.weather span {
  color: #c9c9cf;
}
.apps {
  display: flex;
  align-items: center;
  gap: 25px;
}
.apps button {
  position: relative;
  width: 30px;
  height: 50px;
}
.task-search {
  width: 275px;
  height: 40px;
  display: flex;
  align-items: center;
  gap: 12px;
  margin: 0 -10px 0 -9px;
  padding: 0 7px 0 13px;
  border: 1px solid #55545f;
  border-radius: 20px;
  background: #403e4e;
  font-size: 16px;
}
.task-search input {
  flex: 1;
  min-width: 0;
  border: 0;
  padding: 0;
  outline: 0;
  background: none;
}
.task-search input::placeholder {
  color: #cfcfd6;
}
.running::after,
.current-app::after {
  content: "";
  position: absolute;
  left: 11px;
  bottom: 0;
  width: 8px;
  height: 4px;
  border-radius: 2px;
  background: #9b9ba3;
}
.current-app::after {
  left: 5px;
  width: 20px;
  background: #d89ae0;
}
.current-app::before {
  content: "";
  position: absolute;
  inset: 0 -10px;
  border: 1px solid #3a3a4c;
  border-radius: 5px;
  background: #2d2d40;
}
.current-app svg {
  position: relative;
}
.current-app .avatar-mini {
  position: absolute;
  right: -6px;
  top: 5px;
}
.badge::after {
  content: "";
  position: absolute;
  right: -6px;
  top: 4px;
  width: 20px;
  height: 20px;
  border-radius: 50%;
  background: #ffc20a;
}
.tray {
  display: flex;
  align-items: center;
  justify-content: flex-end;
  gap: 9px;
  padding: 0 24px 2px 0;
}
.cloud {
  margin-left: 13px;
}
.lang {
  margin: 0 15px;
  text-align: center;
}
.clock {
  margin-left: 16px;
  text-align: right;
}
</style>
